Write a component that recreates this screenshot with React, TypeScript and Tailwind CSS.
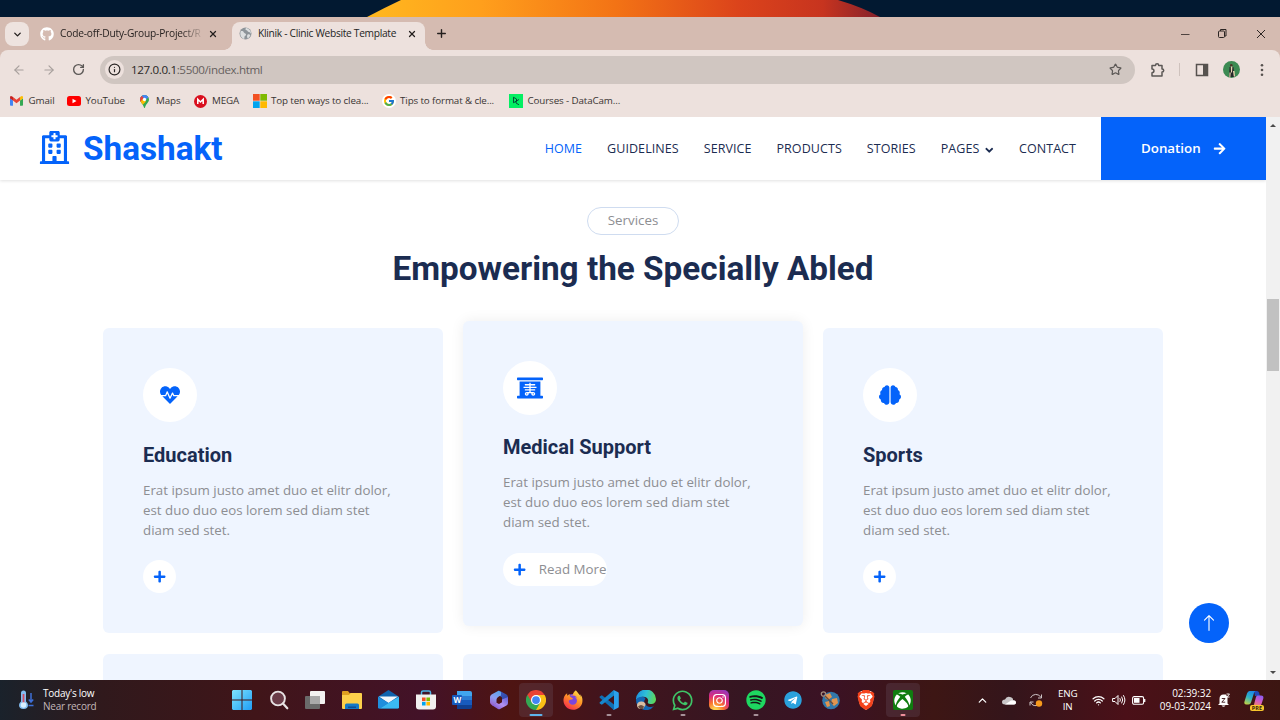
import type { ReactNode } from "react";
import {
  FaAngleDown,
  FaArrowRight,
  FaBrain,
  FaGithub,
  FaHeartbeat,
  FaInstagram,
  FaPlus,
  FaRegHospital,
  FaSpotify,
  FaTelegram,
  FaWhatsapp,
  FaXRay,
  FaXbox,
} from "react-icons/fa";
import { FaFirefoxBrowser } from "react-icons/fa6";
import { BsArrowUp } from "react-icons/bs";
import { FcGoogle } from "react-icons/fc";
import { SiBrave } from "react-icons/si";
import { ArrowLeft, ArrowRight, ChevronDown, ChevronUp, Info, Plus, RotateCw, Star, Wifi, X } from "lucide-react";

/* ---------- Browser chrome ---------- */

function GlobeIcon() {
  return (
    <svg viewBox="0 0 24 24" className="size-[13px]">
      <circle cx="12" cy="12" r="11" fill="#8d9499" />
      <path d="M3 8c3-1 5 0 6 2s4 1 4 4-3 2-3 5 0 3-1 3C5 21 1 16 3 8zM13 2c-2 2-1 4 1 4s1 3 4 3 3 2 4 4c1-5-3-10-9-11zM16 14c2-1 4 0 5 1-1 3-3 5-5 6-1-2-2-5 0-7z" fill="#dcdfe0" />
    </svg>
  );
}

function Wallpaper() {
  return (
    <svg viewBox="0 0 1280 17" className="block h-[17px] w-full shrink-0">
      <defs>
        <linearGradient id="flame" x1="367" x2="885" y1="0" y2="0" gradientUnits="userSpaceOnUse">
          <stop offset="0" stopColor="#ffb81f" />
          <stop offset="0.22" stopColor="#ff9f1c" />
          <stop offset="0.48" stopColor="#f37315" />
          <stop offset="0.72" stopColor="#db431b" />
          <stop offset="0.88" stopColor="#c7341f" />
          <stop offset="1" stopColor="#7e1f2c" />
        </linearGradient>
      </defs>
      <rect width="1280" height="17" fill="#021931" />
      <path d="M367 17 Q384 8 401 0H838Q862 7 880 17Z" fill="url(#flame)" />
    </svg>
  );
}

function TabStrip() {
  return (
    <div className="flex h-[33px] shrink-0 bg-[#d5bbb1] text-[10.2px] text-[#241f1e]">
      <div className="ml-[5px] mt-[5px] flex size-[24px] items-center justify-center rounded-[8px] bg-[#eee3df]">
        <ChevronDown size={11} strokeWidth={3} />
      </div>
      <div className="ml-[11px] flex w-[192px] items-center">
        <FaGithub size={14} color="#fff" />
        <span className="ml-[6px] mt-px w-[142px] whitespace-nowrap tracking-[-0.2px] [mask-image:linear-gradient(to_right,#000_122px,transparent_144px)]">
          Code-off-Duty-Group-Project/R
        </span>
        <X size={10} strokeWidth={3} className="ml-[6px]" />
      </div>
      <div className="relative mt-[5px] flex h-[28px] w-[193px] items-center rounded-t-[8px] bg-[#ede1dd] pb-[5px] pl-[7px]">
        <div className="absolute bottom-0 left-[-8px] size-[8px] bg-[radial-gradient(circle_at_0_0,transparent_7.5px,#ede1dd_8px)]" />
        <div className="absolute bottom-0 right-[-8px] size-[8px] bg-[radial-gradient(circle_at_100%_0,transparent_7.5px,#ede1dd_8px)]" />
        <GlobeIcon />
        <span className="ml-[6px] mt-px w-[149px] whitespace-nowrap tracking-[-0.29px]">Klinik - Clinic Website Template</span>
        <X size={10} strokeWidth={3} />
      </div>
      <div className="ml-[10px] flex items-center">
        <Plus size={13} strokeWidth={2.6} />
      </div>
      <div className="ml-auto flex items-center">
        <svg viewBox="0 0 100 12" className="h-[12px] w-[100px]" fill="none" stroke="#2c2523" strokeWidth="1">
          <path d="M1 6.500H9.500" strokeWidth="0.800" />
          <rect x="38.500" y="3" width="6" height="6.500" rx="1" />
          <path d="M40.500 3V1.500H46V8H44.500" />
          <path d="M77 2L85 10M85 2L77 10" />
        </svg>
      </div>
    </div>
  );
}

function Toolbar() {
  return (
    <div className="shrink-0 bg-[#d5bbb1]">
      <div className="flex h-[38px] items-center rounded-t-[8px] bg-[#ede1dd] pt-px text-[#5c5856]">
        <ArrowLeft size={14} strokeWidth={2} className="ml-[12px] text-[#a8a09d]" />
        <ArrowRight size={14} strokeWidth={2} className="ml-[16px] text-[#a8a09d]" />
        <RotateCw size={13} strokeWidth={2.5} className="ml-[16px]" />
        <div className="ml-[15px] flex h-[28px] w-[1035px] items-center rounded-full bg-[#d0c6c1] pl-[5px] pr-[13px]">
          <div className="flex size-[19px] items-center justify-center rounded-full bg-[#ede1dd] text-[#2a2625]">
            <Info size={13} strokeWidth={2.2} />
          </div>
          <span className="ml-[7px] text-[11.6px] tracking-[-0.36px] text-[#66605e]">
            <span className="text-[#2a2625]">127.0.0.1</span>:5500/index.html
          </span>
          <Star size={13} strokeWidth={2.2} className="ml-auto" />
        </div>
        <svg viewBox="0 0 16 16" className="ml-[15px] size-[16px]" fill="none" stroke="currentColor" strokeWidth="1.500">
          <path d="M2 3.500H5.500C5.500 1.300 8.700 1.300 8.700 3.500H12V7C14.300 7 14.300 10 12 10V14H2V10.700C4.600 10.700 4.600 7 2 7Z" strokeLinejoin="round" />
        </svg>
        <div className="ml-[13px] h-[13px] w-px bg-[#cfc2bd]" />
        <svg viewBox="0 0 14 14" className="ml-[15px] size-[14px]">
          <rect x="1.500" y="1.500" width="11" height="11" fill="none" stroke="#57524f" strokeWidth="1.500" />
          <rect x="8" y="1.500" width="4.500" height="11" fill="#57524f" />
        </svg>
        <svg viewBox="0 0 17 17" className="ml-[14px] size-[17px]">
          <circle cx="8.500" cy="8.500" r="8.500" fill="#3c8a52" />
          <path d="M6 16L6.500 6.500Q7 5.500 8.500 5.500T10.500 6.500L11.500 16Z" fill="#24282b" />
          <circle cx="8.300" cy="4.300" r="1.300" fill="#4a3528" />
          <path d="M7.800 5.500h1.600L9 11.500H8zM6.500 11.500h1.200l-.4 5h-1zM10 10h1.500l.5 5.500h-1.200z" fill="#ead9b0" />
        </svg>
        <svg viewBox="0 0 4 14" className="ml-[20px] h-[14px] w-[4px]" fill="#57524f">
          <circle cx="2" cy="2.200" r="1.300" />
          <circle cx="2" cy="7" r="1.300" />
          <circle cx="2" cy="11.800" r="1.300" />
        </svg>
      </div>
    </div>
  );
}

function GmailIcon() {
  return (
    <svg viewBox="0 0 24 18" className="w-[13px]">
      <path d="M0 3v13.500Q0 18 1.500 18H5.500V8.500L0 4Z" fill="#4285f4" />
      <path d="M24 3v13.500Q24 18 22.500 18H18.500V8.500L24 4Z" fill="#34a853" />
      <path d="M5.500 8.500V2L12 7l6.500-5v6.500L12 13.500Z" fill="#ea4335" />
      <path d="M0 3Q0-1.500 4 .7L5.500 2v6.500L0 4.500Z" fill="#c5221f" />
      <path d="M24 3Q24-1.500 20 .7L18.500 2v6.500L24 4.500Z" fill="#fbbc04" />
    </svg>
  );
}

function YouTubeIcon() {
  return (
    <svg viewBox="0 0 28 20" className="w-[14px]">
      <rect width="28" height="20" rx="5" fill="#f00" />
      <path d="M11 5.500v9l8-4.500z" fill="#fff" />
    </svg>
  );
}

function MapsIcon() {
  return (
    <svg viewBox="0 0 18 26" className="ml-[2px] h-[13px]">
      <defs>
        <clipPath id="pin">
          <path d="M9 0a9 9 0 0 1 9 9c0 6-6 8-8 16q-1 2-2 0C6 17 0 15 0 9a9 9 0 0 1 9-9z" />
        </clipPath>
      </defs>
      <g clipPath="url(#pin)">
        <rect width="18" height="26" fill="#34a853" />
        <path d="M0 0H18V4L7 13L0 7Z" fill="#4285f4" />
        <path d="M0 3 4 2 8 7 1 14-2 12Z" fill="#ea4335" />
        <path d="M0 14 6 8 12 13 5 20Z" fill="#fbbc04" />
      </g>
      <circle cx="9" cy="9" r="3.300" fill="#fff" />
    </svg>
  );
}

function MegaIcon() {
  return (
    <svg viewBox="0 0 24 24" className="w-[13px]">
      <circle cx="12" cy="12" r="12" fill="#d90f1e" />
      <path d="M7 16.500V8l5 5 5-5v8.500" fill="none" stroke="#fff" strokeWidth="2.800" />
    </svg>
  );
}

function MicrosoftIcon() {
  return (
    <svg viewBox="0 0 14 14" className="w-[14px]">
      <rect width="6.700" height="6.700" fill="#f25022" />
      <rect x="7.300" width="6.700" height="6.700" fill="#7fba00" />
      <rect y="7.300" width="6.700" height="6.700" fill="#00a4ef" />
      <rect x="7.300" y="7.300" width="6.700" height="6.700" fill="#ffb900" />
    </svg>
  );
}

function DataCampIcon() {
  return (
    <svg viewBox="0 0 28 28" className="w-[14px]">
      <rect width="28" height="28" fill="#03ef62" />
      <path d="M9 17.500V6.500L15 10V14L9 17.500M20 11L14 14.500V18L20 21.500" fill="none" stroke="#05192d" strokeWidth="1.500" />
    </svg>
  );
}

const bookmarks: { label: string; icon: ReactNode; box: string }[] = [
  { label: "Gmail", icon: <GmailIcon />, box: "w-[57px]" },
  { label: "YouTube", icon: <YouTubeIcon />, box: "w-[70.500px]" },
  { label: "Maps", icon: <MapsIcon />, box: "w-[56px]" },
  { label: "MEGA", icon: <MegaIcon />, box: "w-[59px]" },
  { label: "Top ten ways to clea...", icon: <MicrosoftIcon />, box: "w-[129px]" },
  {
    label: "Tips to format & cle...",
    icon: (
      <span className="flex size-[14px] items-center justify-center rounded-full bg-white">
        <FcGoogle size={12} />
      </span>
    ),
    box: "w-[127.500px]",
  },
  { label: "Courses - DataCam...", icon: <DataCampIcon />, box: "w-[120px]" },
];

function BookmarksBar() {
  return (
    <div className="flex h-[29px] shrink-0 items-center bg-[#ede1dd] pb-[3px] pl-[10px] text-[9.8px] tracking-[-0.12px] text-[#3a3533]">
      {bookmarks.map((b) => (
        <div key={b.label} className={`flex shrink-0 items-center whitespace-nowrap ${b.box}`}>
          <span className="flex w-[18.500px] items-center">{b.icon}</span>
          {b.label}
        </div>
      ))}
    </div>
  );
}

/* ---------- Web page ---------- */

const navItems = ["HOME", "GUIDELINES", "SERVICE", "PRODUCTS", "STORIES", "PAGES", "CONTACT"];

function SiteHeader() {
  return (
    <header className="relative z-10 flex h-[63px] shrink-0 items-center bg-white shadow-[0_1px_3px_rgba(0,0,0,0.12)]">
      <div className="ml-[40px] flex items-center text-[#0463fa]">
        <FaRegHospital size={33.3} className="-ml-[2px] mb-[2px] w-[33px]" />
        <span className="ml-[12px] font-[Roboto] text-[33.3px] font-bold leading-[40px]">Shashakt</span>
      </div>
      <nav className="ml-auto mr-[25px] mt-px flex gap-[25px] text-[12.5px] tracking-[0.07px] text-[#1b2c51]">
        {navItems.map((item) => (
          <a key={item} className={item === "HOME" ? "text-[#0463fa]" : "flex items-center"}>
            {item}
            {item === "PAGES" && <FaAngleDown size={12.5} className="-mr-[2px] ml-[4px] mt-[2px]" />}
          </a>
        ))}
      </nav>
      <a className="flex h-full w-[165px] items-center justify-center bg-[#0463fa] text-[13.33px] font-semibold text-white">
        Donation
        <FaArrowRight size={13.3} className="ml-[12px]" />
      </a>
    </header>
  );
}

function ServiceCard({ title, icon, raised = false }: { title: string; icon: ReactNode; raised?: boolean }) {
  return (
    <article
      className={`flex h-[305px] flex-col items-start rounded-[6px] bg-[#eff5ff] p-[40px] ${
        raised ? "mt-[-7px] shadow-[0_0_14px_rgba(0,0,0,0.07)]" : ""
      }`}
    >
      <div className="flex size-[54px] items-center justify-center rounded-full bg-white text-[#0463fa]">{icon}</div>
      <h4 className={`font-[Roboto] text-[20px] font-bold leading-[24px] text-[#1b2c51] ${raised ? "mt-[20px]" : "mt-[21px]"}`}>
        {title}
      </h4>
      <p className="mt-[13px] w-[255px] text-[13.33px] leading-[20px] text-[#8d8e92]">
        Erat ipsum justo amet duo et elitr dolor, est duo duo eos lorem sed diam stet diam sed stet.
      </p>
      <a
        className={`flex h-[33px] items-center overflow-hidden whitespace-nowrap rounded-full bg-white text-[13.33px] text-[#8d8e92] ${
          raised ? "mt-[21px] w-[104px] pl-[10px]" : "mt-[20px] w-[33px] justify-center"
        }`}
      >
        <FaPlus size={13.3} className="shrink-0" color="#0463fa" />
        {raised && <span className="ml-[12.500px]">Read More</span>}
      </a>
    </article>
  );
}

function Page() {
  return (
    <div className="relative flex min-w-0 flex-1 flex-col overflow-hidden bg-white">
      <SiteHeader />
      <div className="flex flex-col items-center pt-[27px]">
        <div className="flex h-[28px] w-[92px] items-center justify-center rounded-full border border-[#cfdcf0] text-[13.33px] text-[#8d8e92]">
          Services
        </div>
        <h1 className="mt-[14px] font-[Roboto] text-[33.3px] font-bold leading-[40px] text-[#1b2c51]">
          Empowering the Specially Abled
        </h1>
      </div>
      <div className="mx-auto mt-[39px] grid w-[1060px] shrink-0 grid-cols-3 gap-x-[20px] gap-y-[21px]">
        <ServiceCard title="Education" icon={<FaHeartbeat size={20} />} />
        <ServiceCard title="Medical Support" icon={<FaXRay size={26} />} raised />
        <ServiceCard title="Sports" icon={<FaBrain size={22} />} />
        <div className="h-[60px] rounded-t-[6px] bg-[#eff5ff]" />
        <div className="h-[60px] rounded-t-[6px] bg-[#eff5ff]" />
        <div className="h-[60px] rounded-t-[6px] bg-[#eff5ff]" />
      </div>
      <a className="absolute bottom-[37px] right-[37px] flex size-[40px] items-center justify-center rounded-full bg-[#0463fa] pb-px text-white">
        <BsArrowUp size={18} />
      </a>
    </div>
  );
}

function Scrollbar() {
  return (
    <div className="flex w-[14px] shrink-0 flex-col items-center bg-[#f1f1f1]">
      <svg viewBox="0 0 8 5" className="mt-[6px] h-[5px] w-[8px]">
        <path d="M1 4L4 1L7 4Z" fill="#4a4a4a" />
      </svg>
      <div className="mt-[171px] h-[72px] w-[12px] bg-[#c1c1c1]" />
      <svg viewBox="0 0 8 5" className="mb-[5px] mt-auto h-[5px] w-[8px]">
        <path d="M1 1L4 4L7 1Z" fill="#4a4a4a" />
      </svg>
    </div>
  );
}

/* ---------- Taskbar ---------- */

function StartIcon() {
  return (
    <svg viewBox="0 0 20 20" className="size-[20px]">
      <defs>
        <linearGradient id="win" x1="0" y1="0" x2="1" y2="1">
          <stop offset="0" stopColor="#7fe4fd" />
          <stop offset="1" stopColor="#1f9df5" />
        </linearGradient>
      </defs>
      <path d="M1 0H9.500V9.500H0V1ZM10.500 0H19L20 1V9.500H10.500ZM0 10.500H9.500V20H1L0 19ZM10.500 10.500H20V19L19 20H10.500Z" fill="url(#win)" />
    </svg>
  );
}

function SearchIcon() {
  return (
    <svg viewBox="0 0 20 20" className="size-[20px]">
      <circle cx="9" cy="8.500" r="6.900" fill="#6a3c48" stroke="#e8e3e4" strokeWidth="1.900" />
      <path d="M14 13.500L18.300 18.300" stroke="#e8e3e4" strokeWidth="2.200" strokeLinecap="round" />
    </svg>
  );
}

function TaskViewIcon() {
  return (
    <svg viewBox="0 0 20 20" className="size-[20px]">
      <rect x="5" y="1" width="15" height="13" rx="1" fill="#f3f2f1" />
      <rect x="0" y="6" width="15" height="13" rx="1" fill="#6a6a6a" />
      <path d="M5 6h10v8H5z" fill="#a9a9a9" />
    </svg>
  );
}

function ExplorerIcon() {
  return (
    <svg viewBox="0 0 20 20" className="size-[20px]">
      <path d="M0 2Q0 1 1 1H6L8 3.500H19Q20 3.500 20 5V8H0Z" fill="#e0a021" />
      <path d="M0 5H7L8.500 3H19Q20 3 20 4V18Q20 19 19 19H1Q0 19 0 18Z" fill="#fdd04b" />
      <path d="M3 19V15Q3 13.500 4.500 13.500H15.500Q17 13.500 17 15V19Z" fill="#1679c7" />
      <path d="M6 16.500H14V18H6Z" fill="#0d4f94" />
    </svg>
  );
}

function MailIcon() {
  return (
    <svg viewBox="0 0 22 20" className="w-[21px]">
      <path d="M0 7L11 0L22 7V18Q22 19.500 20.500 19.500H1.500Q0 19.500 0 18Z" fill="#0f63ad" />
      <path d="M1 6.800H21L11 13.500Z" fill="#f2f6fa" />
      <path d="M0 7L11 13.500L2 19.500H1.500Q0 19.500 0 18Z" fill="#1f8fdd" />
      <path d="M22 7L11 13.500L2 19.500H20.500Q22 19.500 22 18Z" fill="#3bbaf2" />
    </svg>
  );
}

function StoreIcon() {
  return (
    <svg viewBox="0 0 20 20" className="size-[20px]">
      <path d="M5.500 5V2.500Q5.500 1 7 1H13Q14.500 1 14.500 2.500V5" fill="none" stroke="#4fb4e6" strokeWidth="1.500" />
      <path d="M0 4.500H20V16.500Q20 19.500 17 19.500H3Q0 19.500 0 16.500Z" fill="#f1f0ef" />
      <path d="M6 7.500H9.600V11.100H6Z" fill="#f25022" />
      <path d="M10.400 7.500H14V11.100H10.400Z" fill="#7fba00" />
      <path d="M6 11.900H9.600V15.500H6Z" fill="#00a4ef" />
      <path d="M10.400 11.900H14V15.500H10.400Z" fill="#ffb900" />
    </svg>
  );
}

function WordIcon() {
  return (
    <div className="flex h-[18px] w-[20px] items-center rounded-[2px] bg-[linear-gradient(to_bottom,#41a5ee_0_25%,#2b7cd3_25%_50%,#185abd_50%_75%,#103f91_75%)] bg-[length:15px_100%] bg-right bg-no-repeat">
      <span className="flex size-[10px] items-center justify-center rounded-[1px] bg-[#185abd] text-[8px] font-bold leading-none text-white">W</span>
    </div>
  );
}

function M365Icon() {
  return (
    <svg viewBox="0 0 20 20" className="size-[20px]">
      <defs>
        <linearGradient id="m365a" x1="0.6" y1="0" x2="0.2" y2="1">
          <stop offset="0" stopColor="#5fa4ea" />
          <stop offset="0.5" stopColor="#8f9cf0" />
          <stop offset="1" stopColor="#9a5fd0" />
        </linearGradient>
        <linearGradient id="m365b" x1="0" y1="1" x2="1" y2="0">
          <stop offset="0" stopColor="#7046c8" />
          <stop offset="0.5" stopColor="#b592f0" />
          <stop offset="1" stopColor="#5d5fd6" />
        </linearGradient>
        <linearGradient id="m365c" x1="0" y1="0" x2="1" y2="1">
          <stop offset="0" stopColor="#3f5fc4" />
          <stop offset="1" stopColor="#2c3f9e" />
        </linearGradient>
      </defs>
      <path d="M9 1Q10 .5 11 1L17.500 4.500Q19 5.500 19 7V13L13 10V7.500L8 4Z" fill="url(#m365c)" />
      <path d="M9.500 .8L12 2V5.500Q8 7 7.500 9.500V13L3.500 15.500Q1 14 1 12.500V7Q1 5.500 2.500 4.500Z" fill="url(#m365a)" />
      <path d="M3 15.200L7.500 12.800L10 14L13 12.300V9.500L19 7V13Q19 14.500 17.500 15.500L11 19Q10 19.500 9 19Z" fill="url(#m365b)" />
    </svg>
  );
}

function ChromeIcon() {
  return (
    <svg viewBox="0 0 48 48" className="size-[20px]">
      <path d="M24 24L3.200 12A24 24 0 0 1 44.800 12Z" fill="#ea4335" />
      <path d="M24 24L44.800 12A24 24 0 0 1 24 48Z" fill="#fbc116" />
      <path d="M24 24L24 48A24 24 0 0 1 3.200 12Z" fill="#34a853" />
      <path d="M24 12H44.800L34.400 30Z" fill="#fbc116" />
      <path d="M34.400 30L24 48L13.600 30Z" fill="#34a853" />
      <path d="M3.200 12L13.600 30L24 12Z" fill="#ea4335" />
      <path d="M3.200 12L13.600 30L4 30Z" fill="#34a853" />
      <circle cx="24" cy="24" r="12" fill="#fff" />
      <circle cx="24" cy="24" r="9.300" fill="#4285f4" />
    </svg>
  );
}

function FirefoxIcon() {
  return (
    <svg viewBox="0 0 20 20" className="size-[20px]">
      <defs>
        <linearGradient id="fox" x1="0.8" y1="0" x2="0.2" y2="1">
          <stop offset="0" stopColor="#ffe14d" />
          <stop offset="0.45" stopColor="#ff9425" />
          <stop offset="1" stopColor="#f5264f" />
        </linearGradient>
      </defs>
      <circle cx="9.500" cy="11" r="7" fill="#7b45dd" />
      <FaFirefoxBrowser x={0} y={0} size={20} fill="url(#fox)" />
    </svg>
  );
}

function VsCodeIcon() {
  return (
    <svg viewBox="0 0 100 100" className="size-[20px]">
      <path d="M4 33L12 27Q14 26 16 27L75 72V98Q70 98 68 95L4 39Q1 36 4 33Z" fill="#0f6fb4" />
      <path d="M4 67L12 73Q14 74 16 73L75 28V2Q70 2 68 5L4 61Q1 64 4 67Z" fill="#1787cc" />
      <path d="M70 3Q72 0 76 1L96 11Q99 13 99 17V83Q99 87 96 89L76 99Q72 100 70 97L75 94V6Z" fill="#2ba0ec" />
    </svg>
  );
}

function EdgeIcon() {
  return (
    <svg viewBox="0 0 20 20" className="size-[20px]">
      <defs>
        <linearGradient id="edge" x1="0" y1="0.2" x2="1" y2="0.4">
          <stop offset="0" stopColor="#1c8de0" />
          <stop offset="0.5" stopColor="#2fc0d8" />
          <stop offset="1" stopColor="#5bd65c" />
        </linearGradient>
      </defs>
      <path d="M0 10A10 10 0 0 1 20 9C20 13 17 14.500 14 14Q11 13.500 12 11.500C13 8 9 6 5.500 7Q1.500 8 0 10Z" fill="url(#edge)" />
      <path d="M0 10C2 6 9 6 9.500 9C7 11 8 16 14 17Q17 17 18 16A10 10 0 0 1 0 10Z" fill="#1266b5" />
      <path d="M1 15Q1.500 11 6 11.500Q10 12.500 9.500 15L7 19H4Q1 18 1 15Z" fill="#d9bda3" />
      <path d="M2 16.500Q5 13.500 8 16.500L7 19H4Z" fill="#6a4e40" />
    </svg>
  );
}

function InstagramIcon() {
  return (
    <span className="flex size-[20px] items-center justify-center rounded-[5px] bg-[radial-gradient(circle_at_30%_105%,#fed24e_10%,#f9732f_35%,#dd2a7b_60%,#7f3bd0_100%)]">
      <FaInstagram size={15} color="#fff" />
    </span>
  );
}

function BackedIcon({ children, under }: { children: ReactNode; under: string }) {
  return <span className={`flex size-[18px] items-center justify-center rounded-full ${under}`}>{children}</span>;
}

function AtlasIcon() {
  return (
    <svg viewBox="0 0 20 20" className="size-[20px]">
      <circle cx="11" cy="10.500" r="8.800" fill="#3278ab" />
      <path d="M5 5L10 3L12 7L8 10L5 8ZM12 9L17 8L18 13L14 16L11 13ZM5 12L9 11L10 16L7 17Z" fill="#e2954f" />
      <circle cx="3.500" cy="4" r="2.200" fill="none" stroke="#a58c7c" strokeWidth="1.300" />
      <path d="M5 6L13 14" stroke="#654c41" strokeWidth="1.500" />
    </svg>
  );
}

function BraveIcon() {
  return (
    <svg viewBox="0 0 20 20" className="size-[20px]">
      <path d="M5 1H15L18 5L17 12Q16 16 10 20Q4 16 3 12L2 5Z" fill="#fff" />
      <SiBrave x={0} y={0} size={20} fill="#f4431c" />
    </svg>
  );
}

const pins: { name: string; icon: ReactNode; mark?: string; active?: boolean }[] = [
  { name: "start", icon: <StartIcon /> },
  { name: "search", icon: <SearchIcon /> },
  { name: "tasks", icon: <TaskViewIcon /> },
  { name: "explorer", icon: <ExplorerIcon /> },
  { name: "mail", icon: <MailIcon /> },
  { name: "store", icon: <StoreIcon /> },
  { name: "word", icon: <WordIcon /> },
  { name: "m365", icon: <M365Icon /> },
  { name: "chrome", icon: <ChromeIcon />, mark: "w-[13px] bg-[#5fb4ec]", active: true },
  { name: "firefox", icon: <FirefoxIcon /> },
  { name: "code", icon: <VsCodeIcon />, mark: "w-[5px] bg-[#a8929a]" },
  { name: "edge", icon: <EdgeIcon /> },
  { name: "whatsapp", icon: <FaWhatsapp size={23} color="#3fc467" />, mark: "w-[5px] bg-[#a8929a]" },
  { name: "instagram", icon: <InstagramIcon /> },
  {
    name: "spotify",
    icon: (
      <BackedIcon under="bg-[#171717]">
        <FaSpotify size={20} color="#1ed760" className="shrink-0" />
      </BackedIcon>
    ),
    mark: "w-[5px] bg-[#a8929a]",
  },
  {
    name: "telegram",
    icon: (
      <BackedIcon under="bg-white bg-clip-content p-px">
        <FaTelegram size={18} color="#2aa1dc" className="shrink-0" />
      </BackedIcon>
    ),
  },
  { name: "atlas", icon: <AtlasIcon /> },
  { name: "brave", icon: <BraveIcon /> },
  {
    name: "xbox",
    icon: (
      <span className="flex size-[20px] items-center justify-center rounded-[2px] bg-[#107c10]">
        <FaXbox size={17} color="#fff" />
      </span>
    ),
    mark: "w-[5px] bg-[#f0909c]",
    active: true,
  },
];

function Taskbar() {
  return (
    <footer className="flex h-[40px] shrink-0 items-center bg-[linear-gradient(to_right,#1a222b_0%,#30191c_8%,#401519_20%,#431228_33%,#4e1412_40%,#42141c_47%,#361622_58%,#3b1224_65%,#3d1614_73%,#34151b_79%,#4b1018_88%,#3c1612_100%)] text-white">
      <svg viewBox="0 0 16 20" className="ml-[19px] h-[20px] w-[16px]">
        <path d="M2 3Q2 0.500 4.500 .5T7 3V11.500Q9 13 9 15Q9 19 4.500 19T0 15Q0 13 2 11.500Z" fill="#83bdf0" />
        <path d="M4.500 4V14" stroke="#d14d62" strokeWidth="1.800" />
        <circle cx="4.500" cy="15" r="2.800" fill="#d8f0ff" />
        <path d="M12 3V12M9.800 9.500L12 12L14.200 9.500M9.500 15.500H14.500" fill="none" stroke="#3e6fd8" strokeWidth="1.500" />
      </svg>
      <div className="ml-[8px] w-[180.700px] text-[10px] leading-[13px] tracking-[-0.25px]">
        <div>Today's low</div>
        <div className="text-[#c3b8ba]">Near record</div>
      </div>
      <div className="flex">
        {pins.map((p) => (
          <div key={p.name} className="flex w-[36.72px] justify-center">
            <div className={`relative flex size-[34px] items-center justify-center rounded-[4px] ${p.active ? "bg-[#6e5a70]/25" : ""}`}>
              {p.icon}
              {p.mark && <span className={`absolute bottom-[1px] left-1/2 h-[2px] -translate-x-1/2 rounded-full ${p.mark}`} />}
            </div>
          </div>
        ))}
      </div>
      <ChevronUp size={13} strokeWidth={2.3} className="ml-[54.300px]" />
      <svg viewBox="0 0 14 9" className="ml-[13px] h-[9px] w-[14px]">
        <path d="M3 8.500Q0 8.500 0 6T3 3.500Q4.500 0 8 1T11 4Q14 4.300 14 6.500T11.500 8.500Z" fill="#c9c6c8" />
        <path d="M3 8.500L9 4.500Q14 4 14 6.500T11.500 8.500Z" fill="#fff" />
      </svg>
      <svg viewBox="0 0 14 14" className="ml-[13px] size-[14px]" fill="none" stroke="#cdc4c6">
        <path d="M1.500 5A5.800 5.800 0 0 1 12 4.500M12.500 1.500V5H9M8 12.500A5.800 5.800 0 0 1 1.500 9M1 12.500V9H4.500" />
        <circle cx="10" cy="10.500" r="3.200" fill="#f79a1c" stroke="none" />
      </svg>
      <div className="ml-[14px] w-[22px] text-center text-[9.800px] leading-[13px] tracking-[-0.2px]">
        ENG
        <br />
        IN
      </div>
      <Wifi size={13} strokeWidth={2.3} className="ml-[13px]" />
      <svg viewBox="0 0 14 12" className="ml-[7px] h-[12px] w-[14px]" fill="none" stroke="#fff" strokeLinecap="round">
        <path d="M1 4.500H3L6 1.500V10.500L3 7.500H1Z" strokeLinejoin="round" />
        <path d="M8 4.500Q9 6 8 7.500M9.800 3Q11.800 6 9.800 9M11.500 1.500Q14.500 6 11.500 10.500" />
      </svg>
      <svg viewBox="0 0 14 9" className="ml-[6px] h-[9px] w-[14px]">
        <rect x="0.600" y="0.600" width="11" height="7.600" rx="1.500" fill="none" stroke="#fff" strokeWidth="1.100" />
        <rect x="2" y="2" width="5.500" height="4.800" fill="#fff" />
        <path d="M12.700 3V6" stroke="#fff" strokeWidth="1.300" />
      </svg>
      <div className="ml-auto text-right text-[10px] leading-[13.500px] tracking-[-0.1px]">
        02:39:32
        <br />
        09-03-2024
      </div>
      <svg viewBox="0 0 13 14" className="ml-[7px] h-[14px] w-[13px]">
        <path d="M1.500 10.500V6Q1.500 1.500 5.500 1.500H8L9.500 4.500V10.500L11 12H0Z" fill="#fff" />
        <path d="M3.500 12.500Q5.500 15 7.500 12.500Z" fill="#fff" />
        <path d="M3.800 5.500H7L3.800 9.200H7.200" fill="none" stroke="#3b1418" strokeWidth="0.900" />
        <path d="M8.500 1H11.500L9 4H11.500" fill="none" stroke="#fff" strokeWidth="0.900" />
      </svg>
      <div className="relative ml-[13px] mr-[16px] size-[20px]">
        <svg viewBox="0 0 20 20" className="size-[20px]">
          <defs>
            <linearGradient id="pilotLeft" x1="0.7" y1="0" x2="0.3" y2="1">
              <stop offset="0" stopColor="#1b88e8" />
              <stop offset="0.5" stopColor="#30b3c4" />
              <stop offset="1" stopColor="#b9d24a" />
            </linearGradient>
            <linearGradient id="pilotRight" x1="0.7" y1="0" x2="0.3" y2="1">
              <stop offset="0" stopColor="#8f5cf0" />
              <stop offset="0.5" stopColor="#d35cc4" />
              <stop offset="1" stopColor="#f58a5a" />
            </linearGradient>
          </defs>
          <path d="M10 1H13Q14.500 1 15 2.500L16 6H11Z" fill="#2148b8" />
          <path d="M5.500 1H11.500Q10.500 1.500 10 3L7 12.500Q6.500 14.500 4.500 14.500H2Q-.3 14.500 .5 11.500L3 3.500Q3.800 1 5.500 1Z" fill="url(#pilotLeft)" />
          <path d="M13.500 5.500H17Q20 5.500 19.300 8.500L17.500 14Q16.800 16.500 14.500 16.500H8Q9.500 16 10 14.500L12 7Q12.500 5.500 13.500 5.500Z" fill="url(#pilotRight)" />
        </svg>
        <span className="absolute bottom-[-1px] right-0 rounded-[2px] bg-[#f8c62d] px-[2px] text-[5.500px] font-bold leading-[6px] text-[#33210c]">PRE</span>
      </div>
    </footer>
  );
}

export default function App() {
  return (
    <div className="flex h-[720px] w-[1280px] flex-col overflow-hidden font-['Open_Sans',sans-serif]">
      <Wallpaper />
      <TabStrip />
      <Toolbar />
      <BookmarksBar />
      <div className="flex min-h-0 flex-1">
        <Page />
        <Scrollbar />
      </div>
      <Taskbar />
    </div>
  );
}
